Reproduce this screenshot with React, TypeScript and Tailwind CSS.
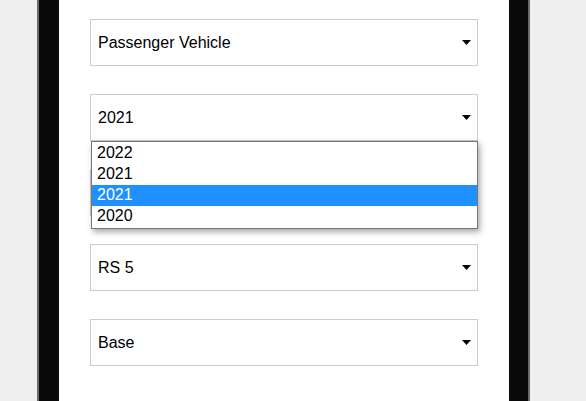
import React from 'react';

// the Make select sits under the open Year list, so its text is never seen
const fields = [
  { label: 'Type', value: 'Passenger Vehicle' },
  { label: 'Year', value: '2021' },
  { label: 'Make', value: '' },
  { label: 'Model', value: 'RS 5' },
  { label: 'Trim', value: 'Base' },
];

const yearOptions = [
  { value: '2022', active: false },
  { value: '2021', active: false },
  { value: '2021', active: true },
  { value: '2020', active: false },
];

function Caret() {
  return (
    <svg width="9" height="5" viewBox="0 0 9 5" className="shrink-0">
      <path d="M0 0 H9 L4.5 5 Z" fill="#000" />
    </svg>
  );
}

function FakeSelect({ value, children }: { value: string; children?: React.ReactNode }) {
  return (
    <div className="relative">
      <div className="flex h-[47px] items-center justify-between border border-[#cccccc] bg-white pl-[7px] pr-[6px]">
        <span className="text-[16px] text-black">{value}</span>
        <Caret />
      </div>
      {children}
    </div>
  );
}

export default function App() {
  return (
    <div
      className="h-[401px] w-[586px] overflow-hidden bg-[#efefef]"
      style={{ fontFamily: '"Liberation Sans", Arial, sans-serif' }}
    >
      <div className="ml-[37px] h-full w-[493px] border-x-2 border-[#6b6b6b] bg-[#0a0a0a] pl-[20px] pr-[18px]">
        <div className="flex h-full w-[450px] flex-col gap-[28px] bg-white px-[31px] pt-[19px]">
          {fields.map((f) => (
            <FakeSelect key={f.label} value={f.value}>
              {f.label === 'Year' && (
                <ul className="absolute left-[1px] right-0 top-[47px] z-10 border border-[#767676] bg-white py-[1px] shadow-[2px_3px_6px_rgba(0,0,0,0.35)]">
                  {yearOptions.map((o, i) => (
                    <li
                      key={i}
                      className={`h-[21px] pl-[5px] text-[16px] leading-[20px] ${
                        o.active ? 'bg-[#1e90ff] text-white' : 'text-black'
                      }`}
                    >
                      {o.value}
                    </li>
                  ))}
                </ul>
              )}
            </FakeSelect>
          ))}
        </div>
      </div>
    </div>
  );
}
